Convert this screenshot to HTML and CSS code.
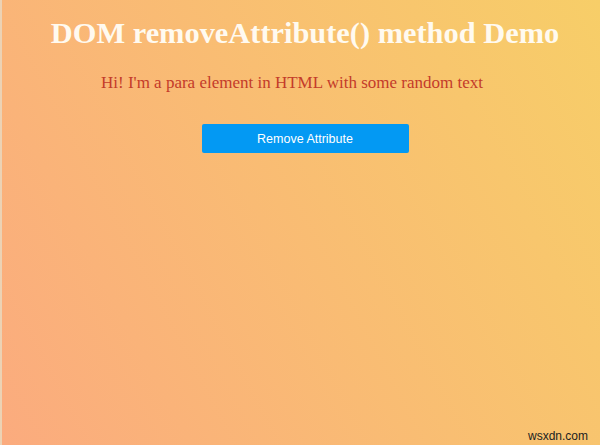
FILE: index.html
```html
<!DOCTYPE html>
<html>
<head>
<meta charset="utf-8">
<link rel="stylesheet" href="styles.css">
</head>
<body>
<div class="page">
  <h1 class="title">DOM removeAttribute() method Demo</h1>
  <p class="para">Hi! I'm a para element in HTML with some random text</p>
  <button class="btn">Remove Attribute</button>
  <div class="mark">wsxdn.com</div>
</div>
</body>
</html>
```
FILE: styles.css
```css
html, body {
  margin: 0;
  padding: 0;
  height: 100%;
}
body {
  font-family: "Liberation Serif", "Times New Roman", serif;
}
.page {
  position: relative;
  box-sizing: border-box;
  height: 445px;
  border-left: 2px solid #ecd2b4;
  background: linear-gradient(62deg, #FBAB7E 0%, #F7CE68 100%);
  display: flex;
  flex-direction: column;
  align-items: center;
  padding-top: 15px;
  padding-left: 8px;
}
.title {
  margin: 0;
  font-size: 30.4px;
  font-weight: bold;
  color: #fffaf0;
  line-height: 36px;
}
.para {
  margin: 20px 26px 0 0;
  font-size: 17px;
  color: #c43b2a;
  line-height: 24px;
}
.btn {
  margin-top: 29px;
  width: 207px;
  height: 29px;
  border: none;
  border-radius: 2px;
  background: #0399f3;
  color: #ffffff;
  font-family: "Liberation Sans", Arial, sans-serif;
  font-size: 12.5px;
}
.mark {
  position: absolute;
  right: 12px;
  bottom: 2px;
  font-family: "Liberation Sans", Arial, sans-serif;
  font-size: 12px;
  color: #222;
}
```
